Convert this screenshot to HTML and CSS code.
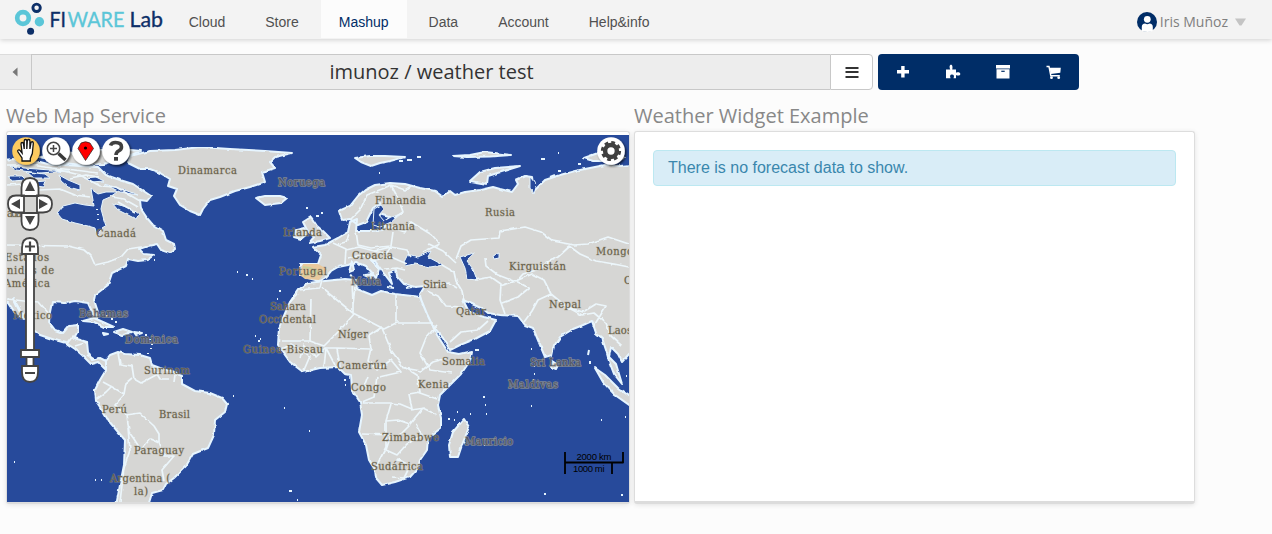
FILE: index.html
```html
<!DOCTYPE html>
<html lang="en">
<head>
<meta charset="utf-8">
<title>FIWARE Lab Mashup</title>
<link rel="stylesheet" href="styles.css">
</head>
<body>
<header class="topbar">
  <svg class="logo" width="170" height="39" viewBox="0 0 170 39">
    <circle cx="23" cy="18" r="5.8" fill="none" stroke="#5bc6d8" stroke-width="4.7"/>
    <circle cx="36.6" cy="7.8" r="3.7" fill="none" stroke="#0d2f68" stroke-width="2.9"/>
    <circle cx="39.4" cy="21.8" r="4.7" fill="#5bc6d8"/>
    <circle cx="30.6" cy="31.2" r="3.5" fill="#0d2f68"/>
    <g class="wordmark">
      <text x="49.5" y="26.5" textLength="16.5" lengthAdjust="spacingAndGlyphs" fill="#0d2f68" stroke="#0d2f68">FI</text>
      <text x="67.5" y="26.5" textLength="57" lengthAdjust="spacingAndGlyphs" fill="#5bc6d8" stroke="#5bc6d8">WARE</text>
      <text x="129.5" y="26.5" textLength="33.5" lengthAdjust="spacingAndGlyphs" fill="#0d2f68" stroke="#0d2f68">Lab</text>
    </g>
  </svg>
  <nav class="nav">
    <a>Cloud</a><a>Store</a><a class="active">Mashup</a><a>Data</a><a>Account</a><a>Help&amp;info</a>
  </nav>
  <div class="user">
    <svg width="20" height="20" viewBox="0 0 20 20"><circle cx="10" cy="10" r="10" fill="#002d67"/><circle cx="10.3" cy="7.3" r="3.4" fill="#fff"/><path d="M4.8 19V15q0-3.5 3.3-3.5 2.2 1.3 4.4 0 3.3 0 3.3 3.5v4q-5 2-11 0z" fill="#fff"/></svg>
    <span>Iris Muñoz</span>
    <svg class="caret" width="11" height="8" viewBox="0 0 11 8"><path d="M0 .5h11L6.5 7.5h-2z" fill="#c4c4c4"/></svg>
  </div>
</header>

<div class="toolbar">
  <div class="back"><svg width="6" height="10" viewBox="0 0 6 10"><path d="M5.5 .5v9L.5 5z" fill="#777"/></svg></div>
  <div class="title">imunoz / weather test</div>
  <div class="menu"><svg width="14" height="12" viewBox="0 0 14 12"><path d="M.5 1h13M.5 5h13M.5 10h13" stroke="#333" stroke-width="2"/></svg></div>
  <div class="actions">
    <svg width="14" height="14" viewBox="0 0 14 14"><path d="M5.2 1h3.400v4H13v3.400H8.600v4.200H5.200V8.400H1V5h4.200z" fill="#fff"/></svg>
    <svg width="16" height="16" viewBox="0 0 16 16"><path d="M1 5.500h4.300C4.200 3.500 4.400.8 6 .8S7.800 3.600 7.200 5.500H11v3.200c2-.8 4.300-.5 4.300 1.200s-2.500 1.900-4.300 1v3.300H8.500c1-2.100.4-3.600-1.600-3.600s-2.200 2-1.300 3.600H1z" fill="#fff"/></svg>
    <svg width="16" height="14" viewBox="0 0 16 14"><path d="M1 0h14v3.500H1zM1.500 4.300h13v9.200h-13z" fill="#fff"/><path d="M6.300 6.300h3.400" stroke="#002d67" stroke-width="1.200"/></svg>
    <svg width="16" height="15" viewBox="0 0 16 15"><path d="M.5 1.500H3l1.800 9.200h9" fill="none" stroke="#fff" stroke-width="1.400"/><path d="M3.500 2.700h11.300l-.5 5L4.800 9.100z" fill="#fff"/><circle cx="5.500" cy="12.700" r="1.400" fill="#fff"/><circle cx="12.700" cy="12.700" r="1.400" fill="#fff"/></svg>
  </div>
</div>

<main class="widgets">
  <section class="widget map-widget">
    <h2>Web Map Service</h2>
    <div class="panel map-panel">
      <svg class="map" width="622" height="367" viewBox="7 135 622 367">
        <defs>
          <filter id="coast" x="0" y="0" width="100%" height="100%"><feTurbulence type="fractalNoise" baseFrequency=".16" numOctaves="1" seed="4"/><feDisplacementMap in="SourceGraphic" scale="3" xChannelSelector="R" yChannelSelector="G"/></filter>
          <filter id="drop" x="-30%" y="-30%" width="180%" height="180%"><feDropShadow dx="1.500" dy="1.500" stdDeviation="1" flood-color="#000" flood-opacity=".7"/></filter>
        </defs>
        <rect x="7" y="135" width="622" height="367" fill="#274a9b"/>
        <g filter="url(#coast)">
        <g class="land">
          <path d="M0 160L14 159 26 163 40 162 52 165 66 165 80 166 98 167 106 175 120 180 133 184 151 196 147 201 140 200 141 209 147 218 153 225 163 231 166 240 174 244 175 249 170 253 161 250 157 244 148 246 139 249 144 254 154 255 147 260 138 261 128 259 126 266 112 273 108 285 95 295 94 300 98 312 97 318 93 314 88 303 75 301 65 303 52 302 50 312 49 322 55 330 63 333 69 326 78 325 78 331 74 338 87 342 88 352 92 360 100 358 108 362 105 369 98 362 91 364 82 355 75 349 66 343 55 340 40 335 31 328 26 318 20 310 13 298 19 310 24 319 15 313 8 302 0 300Z"/>
          <path d="M40 157L64 153 85 155 98 150 120 149 141 151 131 155 117 160 103 164 82 165 64 163Z"/>
          <path d="M130 156L150 151 175 150 200 147 230 149 265 151 292 153 275 157 270 162 275 168 262 172 265 182 250 187 235 191 220 197 210 200 203 209 200 215 190 211 180 205 174 196 177 189 168 186 170 179 160 173 150 169 140 169 128 163Z"/>
          <path d="M256 198L265 196 280 196 287 198 281 203 265 205Z"/>
          <path d="M355 158L370 156 385 156 405 157 390 161 380 163 371 166 361 162Z"/>
          <path d="M453 156L470 155 485 152 511 155 490 156.500 467 157Z"/>
          <path d="M584 158L598 153 618 153 625 158 606 161 593 161Z"/>
          <path d="M470 181L480 172 495 168 520 166 507 170 488 176 487 184Z"/>
          <path d="M303 222L311 217 317 226 323 231 330 238 320 241 309 243 314 237 307 230Z"/>
          <path d="M294 237L296 230 304 228 307 234 301 239Z"/>
          <path d="M350 219L342 220 339 211 350 206 358 196 365 190 375 185 390 183 405 184 420 188 435 191 443 197 450 191 455 195 465 192 480 190 493 187 500 189 512 192 518 184 516 180 525 176 532 177 534 191 545 180 560 175 575 171 590 168 605 165 620 166 640 164 640 348 629 354 622 362 618 354 611 347 609 357 616 364 622 384 614 374 609 361 606 350 602 338 596 333 592 321 583 325 573 329 560 337 554 346 552 355 545 357 540 345 533 328 525 325 518 316 500 315 488 313 483 309 472 304 463 300 468 310 475 314 484 317 496 320 490 331 475 339 460 345 450 350 443 338 432 325 425 312 421 303 420 294 425 286 415 287 404 284 397 276 396 270 389 273 392 284 386 276 375 261 371 260 379 269 376 278 365 266 356 262 348 265 338 267 331 271 326 277 319 281 308 278 300 276 300 264 318 264 321 255 313 247 325 245 338 238 348 232 350 222 357 219 356 231 371 231 383 230 389 217 379 214 380 203 373 208 366 222 358 225Z"/>
          <path d="M308 283L325 281 345 279 356 280 357 289 372 295 381 291 395 294 412 296 420 297 427 314 437 335 448 352 459 354 472 351 470 361 461 374 450 385 440 395 438 405 441 418 441 428 428 438 427 450 420 460 418 468 410 477 395 482 382 485 376 478 375 470 369 460 366 445 359 432 362 415 360 402 352 390 351 375 345 374 338 367 320 368 303 372 290 362 278 345 279 328 283 318 290 302 298 290Z"/>
          <path d="M464 419L469 427 462 445 458 457 450 457 449 445 453 432Z"/>
          <path d="M595 368L605 375 618 388 632 398 632 407 615 395 603 382Z"/>
          <path d="M552 361L558 365 556 369 551 367Z"/>
          <path d="M106 360L110 355 118 352 125 354 140 355 150 358 152 365 160 368 172 372 182 376 182 384 195 391 210 393 222 398 227 404 225 412 215 420 214 435 208 448 193 454 186 466 174 478 166 484 163 490 152 493 148 506 116 506 120 485 124 465 125 440 118 432 108 420 102 410 96 401 95 390 100 380 106 370Z"/>
          <path d="M83 321L94 318 103 322 114 327 104 327 94 322ZM114 332L123 329 132 332 122 335ZM134 332L142 333 136 335ZM103 333L108 334 104 335ZM373 274L364 275 371 278ZM352 261L354 270 349 272ZM387 287L394 288M406 288L412 287M350 275L352 276"/>
        </g>
        <g class="water">
          <path d="M57 213L63 206 75 203 85 205 94 206 93 200 91 189 98 194 106 192 117 192 110 197 103 200 101 209 104 220 106 226 100 231 97 236 95 228 88 226 75 223 62 219Z"/>
          <path d="M112 203L123 206 132 209 139 214 136 219 128 215 118 210Z"/>
          <path d="M59 175L68 180 80 185 80 190 68 187 61 181ZM27 172L45 174 50 178 34 178ZM8 176L22 176 26 180 12 181ZM33 182L46 181 44 187 36 186ZM84 178L96 177 104 181 92 182ZM10 166L24 168 50 170 68 171 40 173 16 170ZM104 184L122 189 138 195 120 192Z"/>
          <path d="M404 262L408 254 418 257 431 251 428 257 443 265 430 267 415 264 406 266Z"/>
          <path d="M460 257L474 253 467 261 473 269 477 280 467 279 465 268Z"/>
          <path d="M493 256L499 253 499 258 494 259ZM374 209L381 205 384 209 379 215 384 221 391 217 401 214 391 222 380 227 373 225ZM530 177L536 184 533 194 530 188Z"/>
        </g>
        <g class="border">
          <path d="M7 165L30 165 52 168 75 170 98 173M8 185L24 184 38 190 60 189 75 195 90 197M55 169L80 175 100 186 116 187 140 201M70 178L86 175 99 177M112 197L124 199 138 207M118 202L135 212"/>
          <path d="M7 245L68 246 84 250 91 256 95 265 108 262 121 257 128 249 141 247M7 299L24 301 39 302 50 315M66 345L73 336 78 338M75 346L88 342M87 355L94 359"/>
          <path d="M118 353L120 364 132 366 134 379 141 383 158 374 153 367M103 382L114 388 124 394 126 383 132 378M97 399L106 392 112 386M124 395L115 405 126 415 140 413 154 426 159 434 159 443 150 439 141 450 134 439 129 432 127 415M128 428L130 450 124 468 120 502M159 443L164 456 174 456 162 470 164 481M157 374L160 379 169 379M175 375L174 382"/>
          <path d="M350 220L360 210 367 195 382 189 391 185 405 190 411 186M391 185L398 198 403 212 394 218M386 226L405 232 411 222 432 235 440 244 423 252M349 234L346 242 338 244M356 231L358 245 371 248 391 246 393 232M333 243L346 249 345 264M346 250L359 247 374 251 391 247 407 250 411 257M348 258L362 255 375 260 391 257 407 264M385 269L397 268 405 270M391 247L386 254 374 251"/>
          <path d="M456 259L461 246 471 240 499 238 500 231 525 227 541 232 553 241 574 245 588 244 608 237 629 244M569 246L580 254 596 261 614 264 629 267M456 263L443 251 429 244M570 246L558 257 546 263 540 269 523 274 516 282 498 275 486 266 485 258M475 280L491 277 501 284 500 300 505 314M500 286L516 281 529 288 518 297 502 303M516 281L532 274 544 280 551 294 567 307 583 312 596 304 606 306 600 316 593 327M551 294L538 300 532 311 524 322M567 307L582 315 594 313 606 323 611 336 622 346M442 265L454 272 456 281 462 291 464 301M433 285L449 283 457 288M427 291L438 296 446 306 463 307M450 342L461 332 478 330 488 321"/>
          <path d="M299 290L320 288 322 281M298 294L290 302M322 288L353 313 353 303 352 281M355 287L353 305M396 294L396 322M353 313L384 329 396 323 433 323M311 299L310 341 281 341M310 341L324 346 341 329 354 314M382 327L369 336 371 349 338 348 325 348M279 350L291 344 310 356 304 370M300 359L303 345 316 357 326 347M324 367L326 348 335 365M340 367L337 348M371 348L368 361 377 370 391 360 401 372 379 377M382 328L391 350 404 368 421 371 433 362 448 358M404 367L417 375 420 392 409 394 412 409 400 404 390 403 379 403 362 403M437 325L426 338 420 353 430 370 452 373M391 404L386 421 398 420 410 424 423 408 437 415M362 434L391 435 386 450 397 455 407 444 423 435M386 421L386 447 376 467M410 425L401 434M416 424L422 435M362 402L374 397 377 377M368 376L363 389M417 392L437 399M411 410L425 408M391 467L398 459 410 466 404 478 392 477"/>
        </g>
        </g>
        <path class="islets" d="M237 272h1M246 275h2M252 279h1M279 291h2M277 299h1M306 208h2M316 216h3M321 213h2M379 173h1M407 160h5M417 157h4M399 161h4M558 153h1M541 159h4M578 164h3M255 336h1M260 339h1M258 341h2M233 396h1M284 408h1M309 431h1M289 491h3M297 500h1M345 385h1M344 380h2M483 397h2M485 405h1M486 414h1M448 419h2M454 420h1M457 412h1M470 414h1M531 406h1M531 349h1M534 366h1M534 374h1M533 380h1M589 350l-1 5M590 361v3M601 420h1M625 417h1M621 495h2M545 493v2M14 462h1M95 480h1M101 480h1M106 316h2M111 319h2M115 322h2M145 335h2M150 339v1M152 344v1M151 348v1M148 353v1M141 356h1M97 209v1M98 214v1M98 219v1M154 260h1M475 350h4M626 376h1M484 445h1M550 177l5-2M558 171h3"/>
        <g fill="none"><path d="M303 264h15l9 5-8 11-14-1-5-4z" fill="#e9c99d"/><path d="M303 267l7 1 8 4M304 276l10-5 4 4" stroke="#c5cf9c" stroke-width="2"/></g>
        <g class="labels">
          <text x="178" y="174" textLength="59">Dinamarca</text><text class="sea" x="278" y="186" textLength="47">Noruega</text><text x="375" y="204" textLength="51">Finlandia</text><text x="485" y="216" textLength="30">Rusia</text><text x="96" y="237" textLength="40">Canadá</text><text x="283" y="236" textLength="39">Irlanda</text><text x="371" y="230" textLength="44">Lituania</text><text x="352" y="259" textLength="41">Croacia</text><text x="279" y="275" textLength="48">Portugal</text><text class="sea" x="351" y="285" textLength="30">Malta</text><text x="423" y="288" textLength="24">Siria</text><text x="509" y="270" textLength="57">Kirguistán</text><text x="596" y="255" textLength="37">Mongo</text><text x="624" y="284">C</text><text x="549" y="308" textLength="32">Nepal</text><text x="456" y="315" textLength="30">Qatar</text><text x="608" y="334" textLength="24">Laos</text><text x="5" y="261" textLength="44">Estados</text><text x="-2" y="274" textLength="56">Unidos de</text><text x="4" y="287" textLength="46">América</text><text x="7" y="217" textLength="15">ada</text><text x="13" y="319" textLength="39">México</text><text class="sea" x="79" y="317" textLength="49">Bahamas</text><text class="sea" x="125" y="343" textLength="53">Dominica</text><text x="144" y="374" textLength="46">Surinam</text><text x="102" y="413" textLength="25">Perú</text><text x="159" y="418" textLength="31">Brasil</text><text x="134" y="454" textLength="50">Paraguay</text><text x="110" y="482" textLength="60">Argentina (</text><text x="134" y="495" textLength="14">la)</text><text x="270" y="310" textLength="36">Sahara</text><text x="259" y="323" textLength="57">Occidental</text><text x="338" y="338" textLength="30">Níger</text><text x="243" y="353" textLength="80">Guinea-Bissau</text><text x="337" y="369" textLength="50">Camerún</text><text x="351" y="391" textLength="35">Congo</text><text x="418" y="388" textLength="31">Kenia</text><text x="442" y="365" textLength="43">Somalia</text><text x="382" y="441" textLength="57">Zimbabwe</text><text x="371" y="470" textLength="52">Sudáfrica</text><text class="sea" x="465" y="445" textLength="48">Mauricio</text><text class="sea" x="508" y="388" textLength="50">Maldivas</text><text class="sea" x="530" y="366" textLength="51">Sri Lanka</text>
        </g>
        <g filter="url(#drop)"><circle cx="26" cy="151" r="13.800" fill="#fcca60"/><circle cx="56" cy="151" r="13.800" fill="#fff"/><circle cx="86" cy="151" r="13.800" fill="#fff"/><circle cx="116" cy="151" r="13.800" fill="#fff"/><circle cx="611" cy="151" r="13.800" fill="#fff"/></g>
        <path d="M22 161v-3l-4-6c-1-2 1-3 2.500-1l1.600 2-1.100-9c0-2 2.300-2 2.500 0l.7 5V141c0-2 2.600-2 2.600 0v8l.5-8c.2-2 2.600-2 2.600 0v8l1-6c.4-2 2.600-1.500 2.400.5l-1 10-2 5v2.500z" fill="#fff" stroke="#111" stroke-width="1.300"/>
        <circle cx="53.500" cy="148.500" r="6.200" fill="#fff" stroke="#454545" stroke-width="1.500"/><path d="M50 148.500h7M53.500 145v7" stroke="#454545" stroke-width="1.500"/><path d="M58.500 153.500l7 6.500" stroke="#383838" stroke-width="3.400"/>
        <path d="M85.500 160.500l-7.500-12 3-5.500q4.500-2.500 9-0l3.500 5.500z" fill="#f00" stroke="#222" stroke-width=".7"/><circle cx="85.500" cy="148" r="1.600"/>
        <path d="M110.500 145.500q1-3 5-3 6 0 6 4.500 0 2.500-3 4-2.500 1.500-2.500 4" fill="none" stroke="#404040" stroke-width="3.600"/><rect x="114" y="157" width="4" height="3.700" fill="#404040"/>
        <circle cx="611" cy="151" r="5.900" fill="none" stroke="#404040" stroke-width="4.500"/><circle cx="611" cy="151" r="8.600" fill="none" stroke="#404040" stroke-width="3" stroke-dasharray="3.700 3.054"/>
        <g class="control"><path d="M21.500 196v-8q0-10 8.500-10t8.500 10v8zM21.500 213h17v8q0 9-8.500 9t-8.500-9zM24 195.500v17h-8q-8 0-8-8.500t8-8.500zM37 195.500h6q9 0 9 8.500t-9 8.500h-6z"/><path d="M22 254v-6q0-10 8-10t8 10v6zM26 254h8v96h-8zM26.500 357h7v9h-7zM21 350h18v7h-18zM22 366h16v6q0 10-8 10t-8-10z"/></g>
        <path d="M25 191h10l-5-10zM25 216h10l-5 9zM20 199v10l-9-5zM39 199v10l9-5z" fill="#444"/><path d="M25 246.500h10M30 241.500v10M25 373h10" stroke="#444" stroke-width="2.200"/>
        <path d="M565 452v22M565 462.500h58.500M623 452v11M612 463v11" stroke="#000" stroke-width="1.800"/>
        <text class="scale" x="576.500" y="460" textLength="35">2000 km</text><text class="scale" x="573" y="472" textLength="31.500">1000 mi</text>
      </svg>
    </div>
  </section>
  <section class="widget weather-widget">
    <h2>Weather Widget Example</h2>
    <div class="panel weather-panel"><div class="alert">There is no forecast data to show.</div></div>
  </section>
</main>
</body>
</html>
```

FILE: styles.css
```css
* { box-sizing: border-box; }
body { margin: 0; height: 534px; overflow: hidden; background: #fcfcfc; font-family: "Open Sans", sans-serif; }
svg { display: block; }
.topbar { display: flex; height: 39px; background: #f3f3f3; box-shadow: 0 1px 5px rgba(0, 0, 0, .18); }
.wordmark { font: 400 22px Lato, sans-serif; stroke-width: .35px; }
.nav { display: flex; gap: 4px; margin-left: .7px; font: 14px "Liberation Sans", Arial, sans-serif; color: #505050; }
.nav a { height: 38px; padding: 0 18px; line-height: 44px; }
.nav .active { background: #fcfcfc; color: #002d67; }
.user { display: flex; align-items: center; margin-left: auto; padding: 4px 26px 0 0; gap: 3px; font-size: 14px; color: #808080; }
.caret { margin-left: 4px; }
.toolbar { display: flex; height: 36px; margin-top: 15px; }
.back, .title, .menu { display: flex; align-items: center; justify-content: center; border: 1px solid #c8c8c8; background: #ededed; }
.back { width: 31px; padding-right: 2px; border-width: 1px 0; border-color: #dcdcdc; }
.title { width: 799px; padding: 0 0 2px 1px; font-size: 20px; color: #333; border-right: 0; }
.menu { width: 43px; padding-top: 1px; background: #fff; border-radius: 0 4px 4px 0; }
.actions { display: flex; align-items: center; justify-content: space-between; width: 201px; margin-left: 5px; padding: 0 17px 0 18px; background: #002d67; border-radius: 4px; }
.widgets { display: flex; gap: 4px; padding: 10px 0 0 6px; }
.widget h2 { height: 31px; margin: 0; font-size: 20px; font-weight: 400; line-height: 31px; color: #888; }
.panel { height: 373px; background: #fff; border: 1px solid #ddd; border-bottom: 3px solid #dcdcdc; border-radius: 3px; box-shadow: 0 1px 5px rgba(0, 0, 0, .1); }
.map-widget { width: 624px; }
.map-panel { height: 373px; padding-top: 3px; border-bottom-width: 2px; }
.weather-widget { width: 561px; }
.weather-panel { padding: 18px; }
.alert { height: 36px; padding-left: 14px; border: 1px solid #bce8f1; border-radius: 4px; background: #d9edf7; color: #3a87ad; font: 16px/34px "Liberation Sans", Arial, sans-serif; }
.land path { fill: #d6d6d4; stroke: #e6f5ff; stroke-width: 2; stroke-linejoin: round; }
.water path { fill: #274a9b; stroke: #e6f5ff; stroke-width: 1; stroke-linejoin: round; }
.border path { fill: none; stroke: #ecf6fb; stroke-width: 1.7; stroke-linejoin: round; }
.islets { fill: none; stroke: #e6f5ff; stroke-width: 2; }
.labels { font: 11px "DejaVu Serif Condensed", "DejaVu Serif", serif; font-stretch: condensed; fill: #665d48; stroke: #aaa491; stroke-opacity: .5; stroke-width: 1px; paint-order: stroke; }
.labels .sea { fill: #4e5362; stroke: #9b9b92; stroke-opacity: .75; stroke-width: 1.5px; }
.control path { fill: #fff; stroke: #444; stroke-width: 1.8; }
.scale { font: 9.5px "Liberation Sans", Arial, sans-serif; fill: #000; }
```
